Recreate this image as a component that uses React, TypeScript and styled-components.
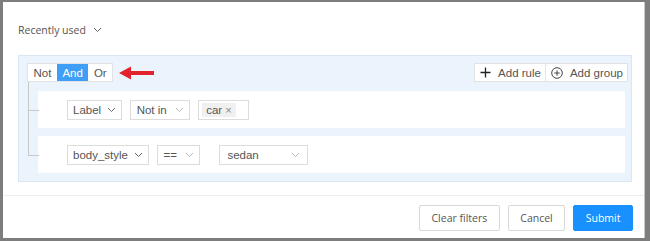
import React from "react";
import styled, { createGlobalStyle } from "styled-components";

const GlobalStyle = createGlobalStyle`
  html, body {
    margin: 0;
    padding: 0;
    background: #7d7d7d;
  }
  * {
    box-sizing: border-box;
  }
`;

const rules = [
  { field: "Label", op: "Not in", value: { kind: "tags", tags: ["car"] } },
  { field: "body_style", op: "==", value: { kind: "select", text: "sedan" } },
];

function Chevron({ light }: { light?: boolean }) {
  return (
    <svg width="9" height="6" viewBox="0 0 9 6" fill="none">
      <path
        d="M1 1l3.5 3.5L8 1"
        stroke={light ? "#b8b8b8" : "#666"}
        strokeWidth="1"
      />
    </svg>
  );
}

export default function App() {
  return (
    <>
      <GlobalStyle />
      <Frame>
        <Modal>
          <Body>
            <RecentRow>
              Recently used
              <Chevron />
            </RecentRow>

            <Group>
              <GroupHeader>
                <Conjunctions>
                  <ConjButton>Not</ConjButton>
                  <ConjButton $active>And</ConjButton>
                  <ConjButton>Or</ConjButton>
                </Conjunctions>
                <Pointer width="36" height="14" viewBox="0 0 36 14">
                  <path d="M0 7L12 0.5V5H35V9H12V13.5Z" fill="#e3232c" />
                </Pointer>
                <Actions>
                  <ActionButton>
                    <svg width="11" height="11" viewBox="0 0 11 11">
                      <path d="M5.5 0.5v10M0.5 5.5h10" stroke="#222" strokeWidth="1.3" />
                    </svg>
                    Add rule
                  </ActionButton>
                  <ActionButton>
                    <svg width="12" height="12" viewBox="0 0 12 12" fill="none">
                      <circle cx="6" cy="6" r="5.3" stroke="#444" strokeWidth="1" />
                      <path d="M6 3.3v5.4M3.3 6h5.4" stroke="#444" strokeWidth="1" />
                    </svg>
                    Add group
                  </ActionButton>
                </Actions>
              </GroupHeader>

              <RuleList>
                {rules.map((rule, i) => (
                  <RuleRow key={i}>
                    <Select>
                      {rule.field}
                      <Chevron />
                    </Select>
                    <Select $wide>
                      {rule.op}
                      <Chevron light />
                    </Select>
                    {rule.value.kind === "tags" ? (
                      <TagInput>
                        {rule.value.tags?.map((t) => (
                          <Tag key={t}>
                            {t}
                            <TagClose>×</TagClose>
                          </Tag>
                        ))}
                      </TagInput>
                    ) : (
                      <ValueSelect>
                        {rule.value.text}
                        <Chevron light />
                      </ValueSelect>
                    )}
                  </RuleRow>
                ))}
              </RuleList>
            </Group>
          </Body>

          <Footer>
            <FooterButton>Clear filters</FooterButton>
            <FooterButton>Cancel</FooterButton>
            <FooterButton $primary>Submit</FooterButton>
          </Footer>
        </Modal>
      </Frame>
    </>
  );
}

const Frame = styled.div`
  width: 650px;
  height: 241px;
  padding: 2px 5px 3px 3px;
`;

const Modal = styled.div`
  background: #fff;
  height: 100%;
  display: flex;
  flex-direction: column;
  border-right: 1px solid #c9c9c9;
`;

const Body = styled.div`
  padding: 20px 12px 0 15px;
  flex: 1;
`;

const RecentRow = styled.div`
  display: flex;
  align-items: center;
  gap: 7px;
  height: 16px;
  font-family: "Open Sans", sans-serif;
  font-size: 10.5px;
  color: #555;
  margin-bottom: 17px;
`;

const Group = styled.div`
  background: #ebf3fc;
  border: 1px solid #d8e6f5;
  padding: 7px 3px 8px 8px;
  height: 127px;
`;

const GroupHeader = styled.div`
  display: flex;
  align-items: center;
  height: 19px;
`;

const Conjunctions = styled.div`
  display: flex;
  height: 19px;
  border: 1px solid #e2e2e2;
  background: #fff;
`;

const ConjButton = styled.div<{ $active?: boolean }>`
  display: flex;
  align-items: center;
  padding: 0 5.5px;
  font-family: "Liberation Sans", Arial, sans-serif;
  font-size: 11.5px;
  color: ${(p) => (p.$active ? "#fff" : "#555")};
  background: ${(p) => (p.$active ? "#3f9ef6" : "#fff")};
`;

const Pointer = styled.svg`
  margin-left: 6px;
  margin-top: 1px;
`;

const Actions = styled.div`
  margin-left: auto;
  display: flex;
  height: 19px;
  border: 1px solid #e2e2e2;
  background: #fff;
`;

const ActionButton = styled.div`
  display: flex;
  align-items: center;
  gap: 7px;
  padding: 0 4px 0 5px;
  font-family: "Liberation Sans", Arial, sans-serif;
  font-size: 11.5px;
  color: #555;

  & + & {
    border-left: 1px solid #e5e5e5;
  }
`;

const RuleList = styled.div`
  display: flex;
  flex-direction: column;
  gap: 8px;
  margin-top: 9px;
  padding-left: 11px;
  padding-right: 3px;
`;

const RuleRow = styled.div`
  position: relative;
  height: 37px;
  background: #fff;
  display: flex;
  align-items: center;
  gap: 8px;
  padding-left: 29px;

  &::before {
    content: "";
    position: absolute;
    left: -10px;
    top: -27px;
    width: 10px;
    height: 46px;
    border-left: 1px solid #c8c8c8;
    border-bottom: 1px solid #c8c8c8;
  }

  &:first-child::before {
    top: -9px;
    height: 28px;
  }
`;

const Select = styled.div<{ $wide?: boolean }>`
  display: flex;
  align-items: center;
  gap: ${(p) => (p.$wide ? "8px" : "6px")};
  height: 20px;
  padding: 0 ${(p) => (p.$wide ? "5.5px" : "5px")};
  border: 1px solid #dcdcdc;
  background: #fff;
  font-family: "Liberation Sans", Arial, sans-serif;
  font-size: 11.5px;
  color: #555;
`;

const ValueSelect = styled(Select)`
  width: 89px;
  justify-content: space-between;
  padding: 0 7px;
  margin-left: 11px;
`;

const TagInput = styled.div`
  display: flex;
  align-items: center;
  height: 20px;
  width: 51px;
  padding: 0 3px;
  border: 1px solid #dcdcdc;
  background: #fff;
`;

const Tag = styled.span`
  display: flex;
  align-items: center;
  gap: 3px;
  height: 14px;
  padding: 0 4px;
  background: #f0f0f0;
  font-family: "Liberation Sans", Arial, sans-serif;
  font-size: 11.5px;
  color: #555;
`;

const TagClose = styled.span`
  font-size: 11px;
  color: #888;
`;

const Footer = styled.div`
  border-top: 1px solid #ededed;
  display: flex;
  justify-content: flex-end;
  align-items: flex-start;
  gap: 8px;
  padding: 9px 11px 7px 0;
  height: 43px;
`;

const FooterButton = styled.button<{ $primary?: boolean }>`
  height: 26px;
  padding: 0 11.5px;
  border-radius: 2px;
  border: 1px solid ${(p) => (p.$primary ? "#1890ff" : "#d9d9d9")};
  background: ${(p) => (p.$primary ? "#1890ff" : "#fff")};
  color: ${(p) => (p.$primary ? "#fff" : "#555")};
  font-family: "Open Sans", sans-serif;
  font-size: 10.5px;
`;
